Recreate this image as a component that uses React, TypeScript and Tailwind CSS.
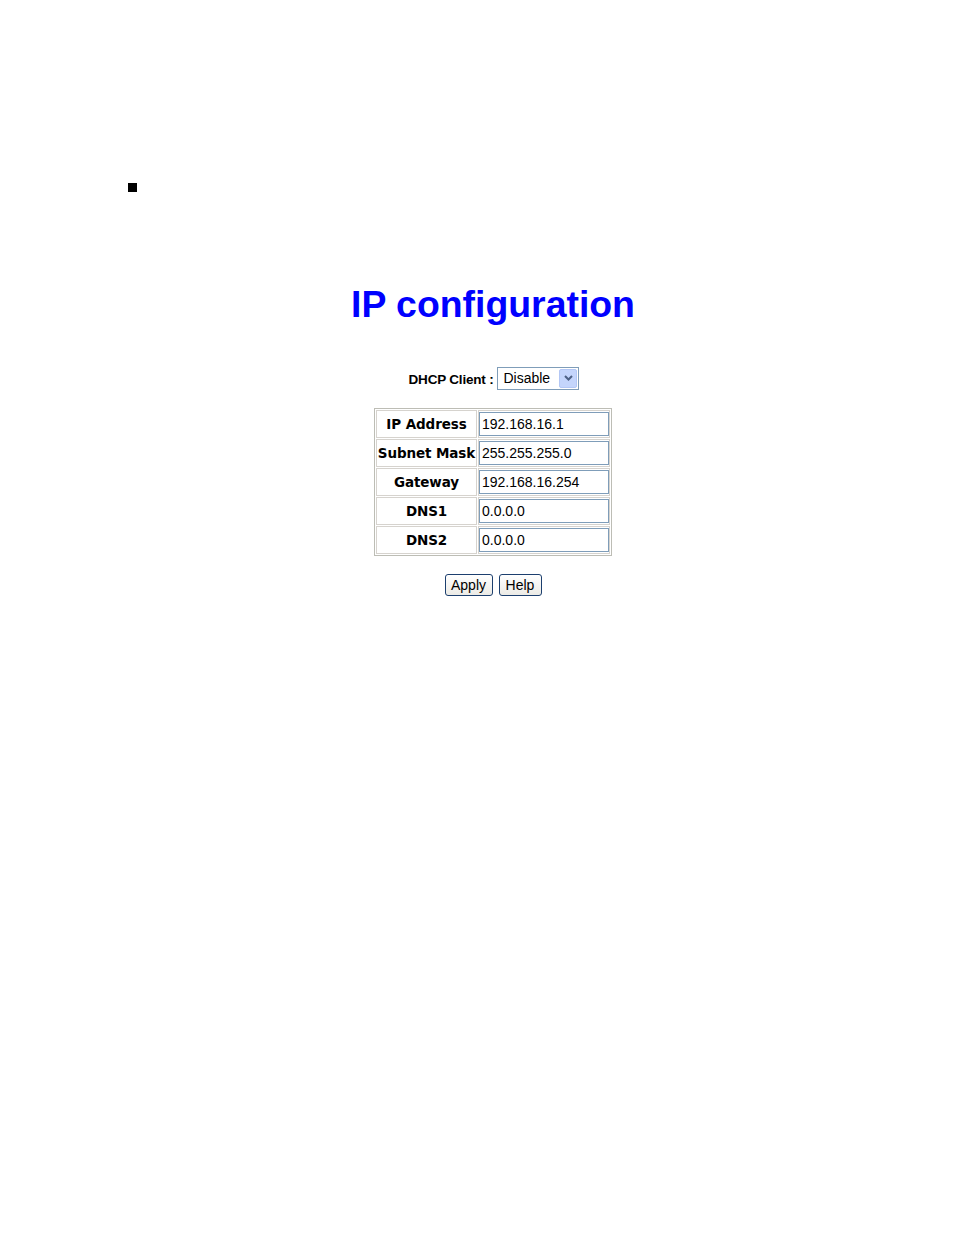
const rows = [
  { label: "IP Address", value: "192.168.16.1" },
  { label: "Subnet Mask", value: "255.255.255.0" },
  { label: "Gateway", value: "192.168.16.254" },
  { label: "DNS1", value: "0.0.0.0" },
  { label: "DNS2", value: "0.0.0.0" },
];

const ChevronDown = () => (
  <svg width="9" height="6" viewBox="0 0 9 6">
    <path d="M1 1 L4.5 4.5 L8 1" fill="none" stroke="#4d6185" strokeWidth="2" />
  </svg>
);

export default function App() {
  return (
    <div className="min-h-[1235px] bg-white font-['Liberation_Sans',Arial,sans-serif] text-black">
      <div className="pt-[183px] pl-[128px]">
        <div className="w-[9px] h-[9px] bg-black" />
      </div>

      <div className="ml-[32px] flex flex-col items-center">
        <h1 className="mt-[94px] text-[37.4px] leading-[37px] font-bold text-[#0000ff]">
          IP configuration
        </h1>

        <div className="mt-[43px] ml-[2px] flex items-center gap-[4px]">
          <span className="pt-[4px] text-[13.5px] font-bold tracking-[-0.2px]">DHCP Client :</span>
          <div className="w-[82px] h-[23px] border border-[#7f9db9] bg-white flex items-center">
            <span className="flex-1 pl-[5px] text-[14px] leading-none">Disable</span>
            <div className="w-[18px] h-[19px] mr-[1px] rounded-[2px] bg-[#c4d5fc] border border-[#b3c7f5] flex items-center justify-center">
              <ChevronDown />
            </div>
          </div>
        </div>

        <table className="mt-[18px] border border-[#bdbdb5] border-separate border-spacing-[1px]">
          <tbody>
            {rows.map((r) => (
              <tr key={r.label}>
                <td className="w-[101px] h-[28px] p-0 border border-[#d6d3ce] text-center font-['DejaVu_Sans',Verdana,sans-serif] text-[13.5px] font-bold whitespace-nowrap tracking-[-0.1px]">
                  {r.label}
                </td>
                <td className="w-[132px] h-[28px] p-0 border border-[#d6d3ce]">
                  <div className="h-[24px] border border-[#7f9db9] bg-white flex items-center pl-[2px] text-[14px]">
                    {r.value}
                  </div>
                </td>
              </tr>
            ))}
          </tbody>
        </table>

        <div className="mt-[18px] flex gap-[6px]">
          <button className="w-[48px] h-[22px] rounded-[3px] border border-[#1c3f6e] bg-gradient-to-b from-white to-[#ecebe6] text-[14px] leading-none">
            Apply
          </button>
          <button className="w-[43px] h-[22px] rounded-[3px] border border-[#1c3f6e] bg-gradient-to-b from-white to-[#ecebe6] text-[14px] leading-none">
            Help
          </button>
        </div>
      </div>
    </div>
  );
}
